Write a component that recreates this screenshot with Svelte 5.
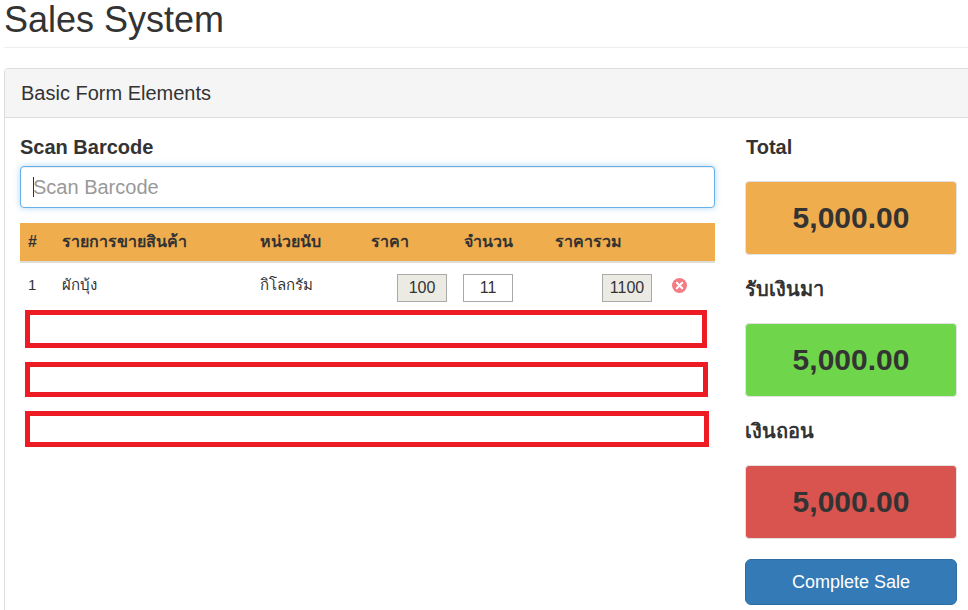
<script>
  const columns = ['#', 'รายการขายสินค้า', 'หน่วยนับ', 'ราคา', 'จำนวน', 'ราคารวม', ''];
  const totals = [
    { label: 'Total', tone: 'orange', latin: true },
    { label: 'รับเงินมา', tone: 'green', latin: false },
    { label: 'เงินถอน', tone: 'red', latin: false }
  ];
</script>

<div class="page">
  <h1>Sales System</h1>
  <section class="panel">
    <header class="panel-heading">Basic Form Elements</header>
    <div class="panel-body">
      <div class="main">
        <label class="field-label" for="barcode">Scan Barcode</label>
        <div class="scan">
          <input id="barcode" type="text" placeholder="Scan Barcode" />
          <span class="caret"></span>
        </div>
        <table>
          <colgroup>
            <col class="c1" /><col class="c2" /><col class="c3" /><col class="c4" /><col class="c5" /><col class="c6" /><col />
          </colgroup>
          <thead>
            <tr>
              {#each columns as c}<th>{c}</th>{/each}
            </tr>
          </thead>
          <tbody>
            <tr>
              <td>1</td>
              <td>ผักบุ้ง</td>
              <td>กิโลกรัม</td>
              <td class="right"><input class="cell readonly price" value="100" readonly /></td>
              <td><input class="cell qty" value="11" /></td>
              <td class="right"><input class="cell readonly" value="1100" readonly /></td>
              <td class="remove">
                <svg width="15" height="15" viewBox="0 0 15 15" aria-label="remove">
                  <circle cx="7.5" cy="7.5" r="7.5" fill="#f47c84" />
                  <path d="M4.8 4.8l5.4 5.4M10.2 4.8l-5.4 5.4" stroke="#fff" stroke-width="2" stroke-linecap="round" />
                </svg>
              </td>
            </tr>
          </tbody>
        </table>
      </div>
      <aside class="side">
        {#each totals as t}
          <div class="total-label" class:latin={t.latin}>{t.label}</div>
          <div class="total-box {t.tone}">5,000.00</div>
        {/each}
        <button type="button">Complete Sale</button>
      </aside>
    </div>
  </section>
  <div class="mark m1"></div>
  <div class="mark m2"></div>
  <div class="mark m3"></div>
</div>

<style>
  :global(body) {
    margin: 0;
    overflow: hidden;
    background: #fff;
  }
  .page {
    position: relative;
    width: 968px;
    height: 610px;
    overflow: hidden;
    box-sizing: border-box;
    padding-left: 4px;
    font-family: "Liberation Sans", "Noto Sans", "DejaVu Sans", sans-serif;
    color: #333;
  }
  h1 {
    margin: 0 0 20px;
    height: 47px;
    box-sizing: content-box;
    border-bottom: 1px solid #eee;
    font-size: 36px;
    font-weight: 400;
    line-height: 39px;
  }
  .panel {
    width: 1000px;
    height: 560px;
    box-sizing: border-box;
    border: 1px solid #ddd;
    border-radius: 4px;
  }
  .panel-heading {
    height: 48px;
    box-sizing: content-box;
    padding-left: 16px;
    background: #f5f5f5;
    border-bottom: 1px solid #ddd;
    border-radius: 3px 3px 0 0;
    font-size: 20px;
    line-height: 48px;
  }
  .panel-body {
    display: flex;
    padding: 15px;
    gap: 30px;
  }
  .main {
    width: 695px;
    flex: none;
  }
  .field-label {
    display: block;
    height: 33px;
    font-size: 20px;
    font-weight: 700;
    line-height: 28px;
  }
  .scan {
    position: relative;
    height: 42px;
  }
  #barcode {
    width: 100%;
    height: 42px;
    box-sizing: border-box;
    padding: 0 12px;
    border: 1px solid #66afe9;
    border-radius: 4px;
    outline: none;
    box-shadow: inset 0 1px 1px rgba(0, 0, 0, 0.075), 0 0 6px rgba(102, 175, 233, 0.5);
    font: 20px "Liberation Sans", sans-serif;
    color: #555;
  }
  #barcode::placeholder {
    color: #999;
    opacity: 1;
  }
  .caret {
    position: absolute;
    left: 13px;
    top: 11px;
    width: 1px;
    height: 20px;
    background: #333;
  }
  table {
    width: 100%;
    margin-top: 15px;
    border-collapse: collapse;
    table-layout: fixed;
    font-size: 15px;
  }
  .c1 { width: 34px; }
  .c2 { width: 198px; }
  .c3 { width: 111px; }
  .c4 { width: 93px; }
  .c5 { width: 91px; }
  .c6 { width: 113px; }
  th {
    height: 38px;
    padding: 0 8px;
    box-sizing: content-box;
    background: #f0ad4e;
    border-bottom: 2px solid #ddd;
    text-align: left;
    font-size: 16px;
    font-weight: 700;
    line-height: 20px;
  }
  td {
    height: 46px;
    padding: 0 8px;
    vertical-align: top;
    line-height: 20px;
    padding-top: 12px;
    box-sizing: border-box;
  }
  td.right {
    text-align: right;
  }
  .cell {
    display: inline-block;
    width: 50px;
    height: 28px;
    margin-top: -1px;
    box-sizing: border-box;
    padding: 0 1px;
    border: 1px solid #a9a9a9;
    background: #fff;
    font: 16px "Liberation Sans", sans-serif;
    color: #333;
    text-align: center;
    vertical-align: top;
  }
  .cell.readonly {
    background: #ebebe4;
  }
  .cell.price {
    margin-right: 1px;
  }
  .cell.qty {
    margin-left: -1px;
  }
  td.remove {
    padding: 15px 0 0 12px;
  }
  .side {
    width: 212px;
    flex: none;
  }
  .total-label {
    height: 48px;
    font-size: 20px;
    font-weight: 700;
    line-height: 28px;
  }
  .total-label.latin {
    padding-left: 1px;
  }
  .total-box {
    height: 74px;
    margin-bottom: 20px;
    box-sizing: border-box;
    border: 1px solid #e3e3e3;
    border-radius: 4px;
    font-size: 30px;
    font-weight: 700;
    line-height: 71px;
    text-align: center;
  }
  .orange { background: #f0ad4e; }
  .green { background: #6fd64b; }
  .red { background: #d9534f; }
  button {
    display: block;
    width: 212px;
    height: 46px;
    padding: 0;
    border: 1px solid #2e6da4;
    border-radius: 6px;
    background: #337ab7;
    color: #fff;
    font: 18px "Liberation Sans", sans-serif;
  }
  .mark {
    position: absolute;
    box-sizing: border-box;
    border: 5px solid #ed1c24;
  }
  .m1 { left: 25px; top: 310px; width: 682px; height: 38px; }
  .m2 { left: 25px; top: 362px; width: 683px; height: 35px; }
  .m3 { left: 25px; top: 411px; width: 684px; height: 36px; }
</style>
